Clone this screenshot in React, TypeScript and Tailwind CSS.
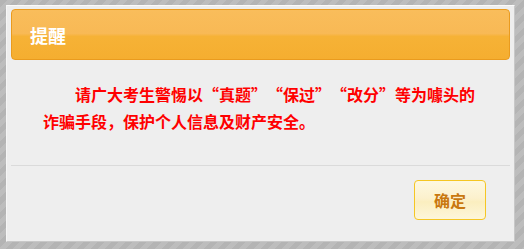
// the CJK font draws narrow curly quotes; centring the quoted word in a
// 4-character cell puts each quote where a full-width one would sit
function Quoted({ children }: { children: string }) {
  return (
    <span className="inline-flex w-[64px] justify-center whitespace-nowrap indent-0">
      “{children}”
    </span>
  );
}

export default function App() {
  return (
    <div
      className="w-[524px] h-[249px] pt-[5px] pl-[6px] pr-[9px] pb-[7px] bg-[repeating-linear-gradient(135deg,#b4b4b4_0px,#b4b4b4_5px,#bdbdbd_5px,#bdbdbd_10px)]"
      style={{ fontFamily: '"Noto Sans CJK SC", "Noto Sans", sans-serif' }}
    >
      <div className="flex h-[237px] w-[509px] flex-col border border-t-[#fafafa] border-l-[#f6f6f6] border-r-[#c8c8c8] border-b-[#c8c8c8] bg-[#eeeeee] px-[4px] pt-[3px]">
        <div className="flex h-[51px] items-center rounded-[4px] border border-[#ea9b1e] bg-[linear-gradient(180deg,#f9bd5b_0%,#f8b955_48%,#f6b236_54%,#f5ae30_100%)] pl-[18px]">
          <span className="text-[18px] font-bold leading-none text-white">提醒</span>
        </div>

        <p className="ml-[32px] mt-[21px] w-[438px] indent-[32px] text-[16px] font-bold leading-[27px] text-[#ff0000]">
          请广大考生警惕以<Quoted>真题</Quoted><Quoted>保过</Quoted><Quoted>改分</Quoted>等为噱头的诈骗手段，保护个人信息及财产安全。
        </p>

        <div className="mt-[30px] h-px bg-[#dadada]" />

        <div className="mt-[14px] flex justify-end pr-[24px]">
          <button className="flex h-[40px] w-[72px] items-center justify-center rounded-[4px] border border-[#f5c623] bg-[linear-gradient(180deg,#fdf8e1_0%,#fcf1cd_45%,#fbeebf_55%,#fdf6da_100%)] text-[16px] font-bold text-[#c9780f]">
            确定
          </button>
        </div>
      </div>
    </div>
  );
}
